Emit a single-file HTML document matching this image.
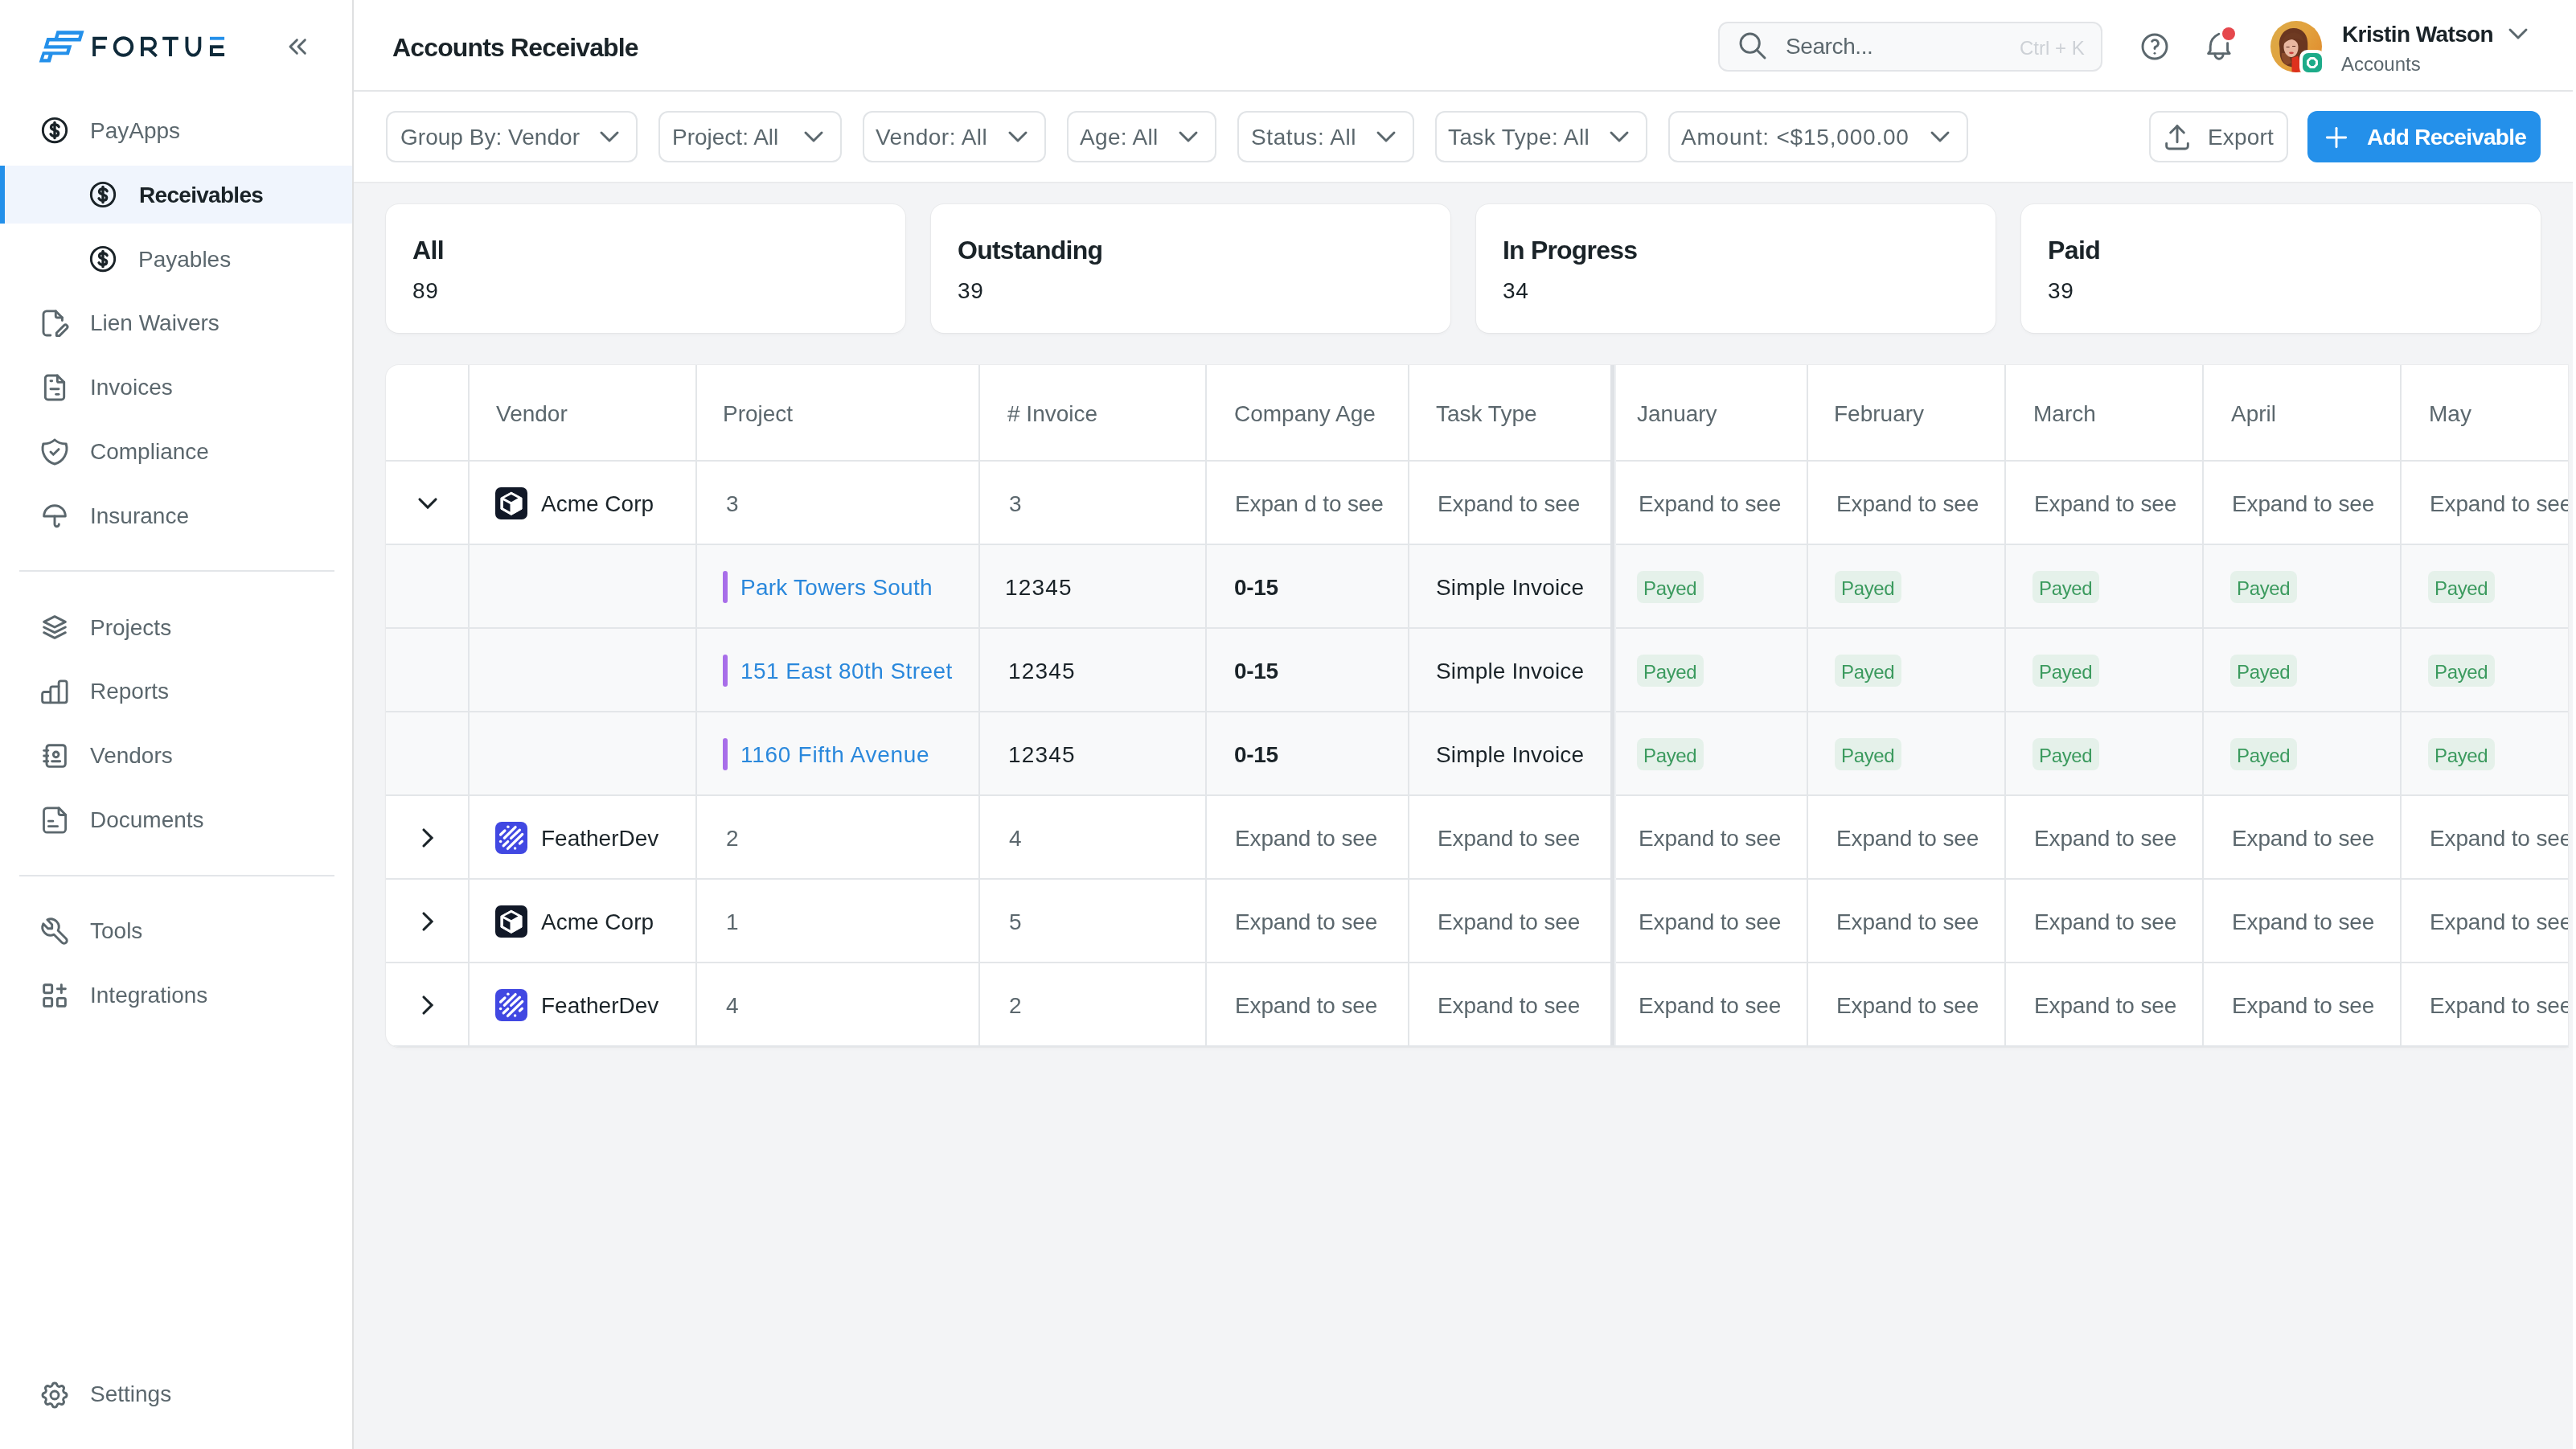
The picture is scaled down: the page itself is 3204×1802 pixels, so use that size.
<!DOCTYPE html>
<html><head><meta charset="utf-8"><title>Accounts Receivable</title><style>
html,body{margin:0;padding:0;}
body{width:3204px;height:1802px;overflow:hidden;position:relative;background:#fff;font-family:"Liberation Sans",sans-serif;}
.abs{position:absolute;}
.t{position:absolute;white-space:nowrap;font-family:"Liberation Sans",sans-serif;-webkit-font-smoothing:antialiased;will-change:transform;}
.ic{position:absolute;overflow:visible;}
.card{background:#fff;border-radius:16px;box-shadow:0 0 0 1px rgba(20,30,40,0.035),0 2px 4px rgba(20,30,40,0.035);}
.tbl{background:#fff;border-radius:16px 0 0 16px;overflow:hidden;box-shadow:0 0 0 1px rgba(20,30,40,0.03),0 2px 4px rgba(20,30,40,0.03);}
</style></head><body>
<div class="abs" style="left:0;top:0;width:438px;height:1802px;background:#fff;"></div>
<div class="abs" style="left:438px;top:0;width:2px;height:1802px;background:#dfe0e1;"></div>
<svg class="ic" style="left:40px;top:30px;width:80px;height:55px" viewBox="0 0 80 55"><g transform="skewX(-16.7)"><path d="M33 8.2H67V12.9H33ZM33 12.9H37.5V17.1H33ZM62.5 12.9H67V17.1H62.5ZM23.5 17.1H67V21.6H23.5ZM23.5 21.6H28V26.2H23.5ZM23.5 26.2H57.2V30.4H23.5ZM52.6 30.0H57.2V34.2H52.6ZM23.2 34.2H57.2V38.3H23.2ZM23 38.3H27V43.3H23ZM32 38.3H37V43.3H32ZM23 43.3H37V47.6H23Z" fill="#2490ea"/></g></svg>
<svg class="ic" style="left:110px;top:40px;width:175px;height:36px" viewBox="110 40 175 36" fill="none" stroke="#0f2a3a" stroke-width="3.9" stroke-linejoin="miter">
<path d="M117.15 69.9V47.75H133.1 M117.15 58.7H131.3" />
<circle cx="153.5" cy="57.95" r="10.75"/>
<path d="M176.95 69.9V47.75H186.5a6.55 6.55 0 0 1 0 13.1H176.95 M185 60.85L194.6 69.9"/>
<path d="M202.2 47.75H221.8 M212 47.75V69.9"/>
<path d="M232.45 45.8V58.6a7.95 10 0 0 0 15.9 0V45.8"/>
<path d="M262.95 69.9V56.3 M261 58.25H277.8 M261 67.95H279.1"/>
<path d="M261 47.75H279.1" stroke="#2490ea"/>
</svg>
<svg class="ic" style="left:350.8px;top:37.5px;width:40px;height:40px;" viewBox="0 0 24 24" fill="none" stroke="#5b676d" stroke-width="1.75" stroke-linecap="round" stroke-linejoin="round"><path d="M11 7l-5 5l5 5"/><path d="M17 7l-5 5l5 5"/></svg>
<div class="abs" style="left:0;top:206px;width:438px;height:72px;background:#f0f5fd;"></div>
<div class="abs" style="left:0;top:206px;width:6px;height:72px;background:#2490ea;"></div>
<svg class="ic" style="left:48px;top:142.2px;width:40px;height:40px;" viewBox="0 0 24 24" fill="none" stroke="#1a2328" stroke-width="1.75" stroke-linecap="round" stroke-linejoin="round"><circle cx="12" cy="12" r="8.8"/><path d="M15.1 9.4C14.7 8.4 13.7 7.7 12 7.7C10.3 7.7 9.3 8.6 9.3 9.8C9.3 11.1 10.5 11.6 12 12C13.6 12.4 14.8 13 14.8 14.3C14.8 15.6 13.8 16.4 12 16.4C10.4 16.4 9.4 15.7 9 14.8" stroke-width="2"/><path d="M12 6.2v11.6" stroke-width="2"/></svg>
<div class="t" style="left:111.5px;top:142.80px;font-size:28px;line-height:40px;color:#5b676d;font-weight:400;letter-spacing:0px;">PayApps</div>
<svg class="ic" style="left:108px;top:222.2px;width:40px;height:40px;" viewBox="0 0 24 24" fill="none" stroke="#1a2328" stroke-width="1.75" stroke-linecap="round" stroke-linejoin="round"><circle cx="12" cy="12" r="8.8"/><path d="M15.1 9.4C14.7 8.4 13.7 7.7 12 7.7C10.3 7.7 9.3 8.6 9.3 9.8C9.3 11.1 10.5 11.6 12 12C13.6 12.4 14.8 13 14.8 14.3C14.8 15.6 13.8 16.4 12 16.4C10.4 16.4 9.4 15.7 9 14.8" stroke-width="2"/><path d="M12 6.2v11.6" stroke-width="2"/></svg>
<div class="t" style="left:172.5px;top:222.80px;font-size:28px;line-height:40px;color:#1a2328;font-weight:700;letter-spacing:-0.7px;">Receivables</div>
<svg class="ic" style="left:108px;top:302.2px;width:40px;height:40px;" viewBox="0 0 24 24" fill="none" stroke="#1a2328" stroke-width="1.75" stroke-linecap="round" stroke-linejoin="round"><circle cx="12" cy="12" r="8.8"/><path d="M15.1 9.4C14.7 8.4 13.7 7.7 12 7.7C10.3 7.7 9.3 8.6 9.3 9.8C9.3 11.1 10.5 11.6 12 12C13.6 12.4 14.8 13 14.8 14.3C14.8 15.6 13.8 16.4 12 16.4C10.4 16.4 9.4 15.7 9 14.8" stroke-width="2"/><path d="M12 6.2v11.6" stroke-width="2"/></svg>
<div class="t" style="left:171.5px;top:302.80px;font-size:28px;line-height:40px;color:#5b676d;font-weight:400;letter-spacing:0px;">Payables</div>
<svg class="ic" style="left:48px;top:381.7px;width:40px;height:40px" viewBox="0 0 40 40" fill="none" stroke="#5b676d" stroke-width="2.9" stroke-linecap="round" stroke-linejoin="round"><path d="M14.8 35H10a4 4 0 0 1 -4 -4V8.84a4 4 0 0 1 4 -4H21.2L29.4 13V16.5"/><path d="M21.3 4.84V11a2 2 0 0 0 2 2H29.4"/><path d="M22.3 35.6v-3.6l9.4 -9.4a2.55 2.55 0 0 1 3.6 3.6l-9.4 9.4z"/></svg>
<div class="t" style="left:111.5px;top:382.30px;font-size:28px;line-height:40px;color:#5b676d;font-weight:400;letter-spacing:0px;">Lien Waivers</div>
<svg class="ic" style="left:48px;top:461.7px;width:40px;height:40px;" viewBox="0 0 24 24" fill="none" stroke="#5b676d" stroke-width="1.75" stroke-linecap="round" stroke-linejoin="round"><path d="M14 3v4a1 1 0 0 0 1 1h4"/><path d="M17 21h-10a2 2 0 0 1 -2 -2v-14a2 2 0 0 1 2 -2h7l5 5v11a2 2 0 0 1 -2 2z"/><path d="M9 7l1 0"/><path d="M9 13l6 0"/><path d="M13 17l2 0"/></svg>
<div class="t" style="left:111.5px;top:462.30px;font-size:28px;line-height:40px;color:#5b676d;font-weight:400;letter-spacing:0px;">Invoices</div>
<svg class="ic" style="left:48px;top:541.7px;width:40px;height:40px;" viewBox="0 0 24 24" fill="none" stroke="#5b676d" stroke-width="1.75" stroke-linecap="round" stroke-linejoin="round"><path d="M9 12l2 2l4 -4"/><path d="M12 3a12 12 0 0 0 8.5 3a12 12 0 0 1 -8.5 15a12 12 0 0 1 -8.5 -15a12 12 0 0 0 8.5 -3"/></svg>
<div class="t" style="left:111.5px;top:542.30px;font-size:28px;line-height:40px;color:#5b676d;font-weight:400;letter-spacing:0px;">Compliance</div>
<svg class="ic" style="left:48px;top:621.7px;width:40px;height:40px;" viewBox="0 0 24 24" fill="none" stroke="#5b676d" stroke-width="1.75" stroke-linecap="round" stroke-linejoin="round"><path d="M4 12a8 8 0 0 1 16 0z"/><path d="M12 12v6a1.6 1.6 0 0 0 3.2 0"/></svg>
<div class="t" style="left:111.5px;top:622.30px;font-size:28px;line-height:40px;color:#5b676d;font-weight:400;letter-spacing:0px;">Insurance</div>
<svg class="ic" style="left:48px;top:759.95px;width:40px;height:40px;" viewBox="0 0 24 24" fill="none" stroke="#5b676d" stroke-width="1.75" stroke-linecap="round" stroke-linejoin="round"><path d="M12 4l-8 4l8 4l8 -4l-8 -4"/><path d="M4 12l8 4l8 -4"/><path d="M4 16l8 4l8 -4"/></svg>
<div class="t" style="left:111.5px;top:760.55px;font-size:28px;line-height:40px;color:#5b676d;font-weight:400;letter-spacing:0px;">Projects</div>
<svg class="ic" style="left:48px;top:839.7px;width:40px;height:40px" viewBox="0 0 40 40" fill="none" stroke="#5b676d" stroke-width="2.8" stroke-linecap="round" stroke-linejoin="round"><path d="M4.6 31.3V23a2.5 2.5 0 0 1 2.5 -2.5H14.8V16.4a2.5 2.5 0 0 1 2.5 -2.5H25.1V9.4a2.5 2.5 0 0 1 2.5 -2.5H32.6a2.5 2.5 0 0 1 2.5 2.5V31.3a2.5 2.5 0 0 1 -2.5 2.5H7.1a2.5 2.5 0 0 1 -2.5 -2.5z"/><path d="M14.8 20.5V33.8M25.1 13.9V33.8"/></svg>
<div class="t" style="left:111.5px;top:840.30px;font-size:28px;line-height:40px;color:#5b676d;font-weight:400;letter-spacing:0px;">Reports</div>
<svg class="ic" style="left:48px;top:919.7px;width:40px;height:40px;" viewBox="0 0 24 24" fill="none" stroke="#5b676d" stroke-width="1.75" stroke-linecap="round" stroke-linejoin="round"><path d="M20 6v12a2 2 0 0 1 -2 2h-10a2 2 0 0 1 -2 -2v-12a2 2 0 0 1 2 -2h10a2 2 0 0 1 2 2z"/><path d="M10 16h6"/><path d="M13 11m-2 0a2 2 0 1 0 4 0a2 2 0 1 0 -4 0"/><path d="M4 8h3"/><path d="M4 12h3"/><path d="M4 16h3"/></svg>
<div class="t" style="left:111.5px;top:920.30px;font-size:28px;line-height:40px;color:#5b676d;font-weight:400;letter-spacing:0px;">Vendors</div>
<svg class="ic" style="left:48px;top:999.7px;width:40px;height:40px" viewBox="0 0 40 40" fill="none" stroke="#5b676d" stroke-width="2.8" stroke-linecap="round" stroke-linejoin="round"><path d="M25.3 4.8H10.5a4 4 0 0 0 -4 4V31.2a4 4 0 0 0 4 4H29.6a4 4 0 0 0 4 -4V13.3Z"/><path d="M25 4.8V11a2.5 2.5 0 0 0 2.5 2.5H33.6"/><path d="M12.4 21.2H17.9M12.4 27.7H23.6"/></svg>
<div class="t" style="left:111.5px;top:1000.30px;font-size:28px;line-height:40px;color:#5b676d;font-weight:400;letter-spacing:0px;">Documents</div>
<svg class="ic" style="left:48px;top:1138.15px;width:40px;height:40px;" viewBox="0 0 24 24" fill="none" stroke="#5b676d" stroke-width="1.75" stroke-linecap="round" stroke-linejoin="round"><path d="M7 10h3v-3l-3.5 -3.5a6 6 0 0 1 8 8l6 6a2 2 0 0 1 -3 3l-6 -6a6 6 0 0 1 -8 -8l3.5 3.5"/></svg>
<div class="t" style="left:111.5px;top:1137.55px;font-size:28px;line-height:40px;color:#5b676d;font-weight:400;letter-spacing:0px;">Tools</div>
<svg class="ic" style="left:48px;top:1218.15px;width:40px;height:40px;" viewBox="0 0 24 24" fill="none" stroke="#5b676d" stroke-width="1.75" stroke-linecap="round" stroke-linejoin="round"><path d="M4 4m0 1a1 1 0 0 1 1 -1h4a1 1 0 0 1 1 1v4a1 1 0 0 1 -1 1h-4a1 1 0 0 1 -1 -1z"/><path d="M4 14m0 1a1 1 0 0 1 1 -1h4a1 1 0 0 1 1 1v4a1 1 0 0 1 -1 1h-4a1 1 0 0 1 -1 -1z"/><path d="M14 14m0 1a1 1 0 0 1 1 -1h4a1 1 0 0 1 1 1v4a1 1 0 0 1 -1 1h-4a1 1 0 0 1 -1 -1z"/><path d="M14 7l6 0"/><path d="M17 4l0 6"/></svg>
<div class="t" style="left:111.5px;top:1217.55px;font-size:28px;line-height:40px;color:#5b676d;font-weight:400;letter-spacing:0px;">Integrations</div>
<svg class="ic" style="left:48px;top:1714.65px;width:40px;height:40px;" viewBox="0 0 24 24" fill="none" stroke="#5b676d" stroke-width="1.75" stroke-linecap="round" stroke-linejoin="round"><path d="M10.325 4.317c.426 -1.756 2.924 -1.756 3.35 0a1.724 1.724 0 0 0 2.573 1.066c1.543 -.94 3.31 .826 2.37 2.37a1.724 1.724 0 0 0 1.065 2.572c1.756 .426 1.756 2.924 0 3.35a1.724 1.724 0 0 0 -1.066 2.573c.94 1.543 -.826 3.31 -2.37 2.37a1.724 1.724 0 0 0 -2.572 1.065c-.426 1.756 -2.924 1.756 -3.35 0a1.724 1.724 0 0 0 -2.573 -1.066c-1.543 .94 -3.31 -.826 -2.37 -2.37a1.724 1.724 0 0 0 -1.065 -2.572c-1.756 -.426 -1.756 -2.924 0 -3.35a1.724 1.724 0 0 0 1.066 -2.573c-.94 -1.543 .826 -3.31 2.37 -2.37c1 .608 2.296 .07 2.572 -1.065z"/><path d="M9 12a3 3 0 1 0 6 0a3 3 0 0 0 -6 0"/></svg>
<div class="t" style="left:111.5px;top:1714.05px;font-size:28px;line-height:40px;color:#5b676d;font-weight:400;letter-spacing:0px;">Settings</div>
<div class="abs" style="left:24px;top:709px;width:392px;height:2px;background:#e3e6e9;"></div>
<div class="abs" style="left:24px;top:1088px;width:392px;height:2px;background:#e3e6e9;"></div>
<div class="abs" style="left:440px;top:0;width:2760px;height:112px;background:#fff;"></div>
<div class="abs" style="left:440px;top:112px;width:2760px;height:2px;background:#e4e6e8;"></div>
<div class="t" style="left:488px;top:39.41px;font-size:32px;line-height:40px;color:#1a2328;font-weight:700;letter-spacing:-0.85px;">Accounts Receivable</div>
<div class="abs" style="left:2137px;top:27px;width:478px;height:62px;box-sizing:border-box;border:2px solid #e3e5e8;border-radius:12px;background:#f8f9fa;"></div>
<svg class="ic" style="left:2160.4px;top:37.45px;width:40px;height:40px;" viewBox="0 0 24 24" fill="none" stroke="#5b676d" stroke-width="1.75" stroke-linecap="round" stroke-linejoin="round"><path d="M10 10m-7 0a7 7 0 1 0 14 0a7 7 0 1 0 -14 0"/><path d="M21 21l-6 -6"/></svg>
<div class="t" style="left:2221px;top:38.30px;font-size:28px;line-height:40px;color:#5b676d;font-weight:400;letter-spacing:-0.4px;">Search...</div>
<div class="t" style="left:2512px;top:39.68px;font-size:24px;line-height:40px;color:#cdd1d6;font-weight:400;letter-spacing:0px;">Ctrl + K</div>
<svg class="ic" style="left:2660px;top:38px;width:40px;height:40px;" viewBox="0 0 24 24" fill="none" stroke="#5b676d" stroke-width="1.75" stroke-linecap="round" stroke-linejoin="round"><path d="M12 12m-9 0a9 9 0 1 0 18 0a9 9 0 1 0 -18 0"/><path d="M12 17l0 .01"/><path d="M12 13.5a1.5 1.5 0 0 1 1 -1.5a2.6 2.6 0 1 0 -3 -4"/></svg>
<svg class="ic" style="left:2740px;top:30px;width:48px;height:48px" viewBox="2740 30 48 48" fill="none" stroke="#5b676d" stroke-width="2.9" stroke-linecap="round" stroke-linejoin="round">
<path d="M2759.8 42.2C2753.6 45.2 2749.2 50 2749.2 57.5V63.2L2746.6 66.6H2773.2L2770.6 63.2V53.6"/>
<path d="M2754.8 67a5.2 6.2 0 0 0 10.4 0"/></svg>
<div class="abs" style="left:2764px;top:34px;width:16px;height:16px;border-radius:50%;background:#e5484d;"></div>
<svg class="ic" style="left:2824px;top:26px;width:64px;height:64px" viewBox="0 0 64 64">
<defs><clipPath id="avc"><circle cx="32" cy="32" r="32"/></clipPath>
<linearGradient id="avbg" x1="0" y1="0" x2="1" y2="0.6"><stop offset="0" stop-color="#dcaa48"/><stop offset="0.6" stop-color="#e2a23e"/><stop offset="1" stop-color="#e08f30"/></linearGradient></defs>
<g clip-path="url(#avc)">
<rect width="64" height="64" fill="url(#avbg)"/>
<path d="M11 31C10 19 17 9.5 28 9C38 8.5 45 15 46 25C47 32 45 38 48 45C45 50 42 53 38 55L30 58C22 57 15 54 13 47C11 42 12 37 11 31Z" fill="#6a3620"/>
<path d="M14 40C13 46 15 51 20 55L26 52L22 40Z" fill="#8a4a2a"/>
<path d="M16.5 31C17 25 21 22.5 26 23C31 23.5 34.5 27 34.5 33C34.5 39 31.5 44.5 26.5 45C21 45.5 16 39 16.5 31Z" fill="#e8b7a0"/>
<path d="M14 28C16 19 22 14 30 14.5C37 15 41 20 41 26C38 22.5 33 21 28 22.5C24 23.5 21 24 18 27C16.5 28.5 15 30 14 31Z" fill="#6e3a22"/>
<path d="M20 32.5h3.2M27.5 31.5h3.2" stroke="#5a2e22" stroke-width="1.1" stroke-linecap="round"/>
<ellipse cx="26" cy="39.8" rx="2.9" ry="1.4" fill="#c9413c"/>
<path d="M26.5 46L36 43L38 64H26.5Z" fill="#dd311d"/>
<path d="M34 42C37 44 40 48 41 52L38 56L35 46Z" fill="#5c2e1c"/>
</g></svg>
<div class="abs" style="left:2860px;top:62px;width:32px;height:32px;box-sizing:border-box;border-radius:10px;background:#fff;"></div>
<div class="abs" style="left:2864px;top:66px;width:24px;height:24px;border-radius:7px;background:#1dab89;"></div>
<svg class="ic" style="left:2866px;top:68px;width:20px;height:20px" viewBox="0 0 20 20"><path d="M7.76 4.56H12.24L15.44 7.76V12.24L12.24 15.44H7.76L4.56 12.24V7.76Z" fill="none" stroke="#fff" stroke-width="3" stroke-linejoin="round"/></svg>
<div class="t" style="left:2912.5px;top:22.80px;font-size:28px;line-height:40px;color:#1a2328;font-weight:700;letter-spacing:-0.6px;">Kristin Watson</div>
<div class="t" style="left:2912px;top:59.68px;font-size:24px;line-height:40px;color:#5b676d;font-weight:400;letter-spacing:0px;">Accounts</div>
<svg class="ic" style="left:3112px;top:22px;width:40px;height:40px;" viewBox="0 0 24 24" fill="none" stroke="#5b676d" stroke-width="1.75" stroke-linecap="round" stroke-linejoin="round"><path d="M6 9l6 6l6 -6"/></svg>
<div class="abs" style="left:440px;top:114px;width:2760px;height:112px;background:#fff;"></div>
<div class="abs" style="left:440px;top:226px;width:2760px;height:2px;background:#eaebed;"></div>
<div class="abs" style="left:440px;top:228px;width:2760px;height:1574px;background:#f3f4f6;"></div>
<div class="abs" style="left:3200px;top:0;width:4px;height:1802px;background:#fff;"></div>
<div class="abs" style="left:480px;top:138px;width:313px;height:64px;box-sizing:border-box;border:2px solid #e1e4e7;border-radius:12px;background:#fff;"></div>
<div class="t" style="left:497.5px;top:150.80px;font-size:28px;line-height:40px;color:#5b676d;font-weight:400;letter-spacing:0.025px;">Group By: Vendor</div>
<svg class="ic" style="left:738.1500000000001px;top:150px;width:40px;height:40px;" viewBox="0 0 24 24" fill="none" stroke="#5b676d" stroke-width="1.75" stroke-linecap="round" stroke-linejoin="round"><path d="M6 9l6 6l6 -6"/></svg>
<div class="abs" style="left:819px;top:138px;width:228px;height:64px;box-sizing:border-box;border:2px solid #e1e4e7;border-radius:12px;background:#fff;"></div>
<div class="t" style="left:836px;top:150.80px;font-size:28px;line-height:40px;color:#5b676d;font-weight:400;letter-spacing:0px;">Project: All</div>
<svg class="ic" style="left:992.1500000000001px;top:150px;width:40px;height:40px;" viewBox="0 0 24 24" fill="none" stroke="#5b676d" stroke-width="1.75" stroke-linecap="round" stroke-linejoin="round"><path d="M6 9l6 6l6 -6"/></svg>
<div class="abs" style="left:1072.5px;top:138px;width:228.75px;height:64px;box-sizing:border-box;border:2px solid #e1e4e7;border-radius:12px;background:#fff;"></div>
<div class="t" style="left:1089.25px;top:150.80px;font-size:28px;line-height:40px;color:#5b676d;font-weight:400;letter-spacing:0.486px;">Vendor: All</div>
<svg class="ic" style="left:1246.4px;top:150px;width:40px;height:40px;" viewBox="0 0 24 24" fill="none" stroke="#5b676d" stroke-width="1.75" stroke-linecap="round" stroke-linejoin="round"><path d="M6 9l6 6l6 -6"/></svg>
<div class="abs" style="left:1327px;top:138px;width:186px;height:64px;box-sizing:border-box;border:2px solid #e1e4e7;border-radius:12px;background:#fff;"></div>
<div class="t" style="left:1343.25px;top:150.80px;font-size:28px;line-height:40px;color:#5b676d;font-weight:400;letter-spacing:0.328px;">Age: All</div>
<svg class="ic" style="left:1458.15px;top:150px;width:40px;height:40px;" viewBox="0 0 24 24" fill="none" stroke="#5b676d" stroke-width="1.75" stroke-linecap="round" stroke-linejoin="round"><path d="M6 9l6 6l6 -6"/></svg>
<div class="abs" style="left:1538.75px;top:138px;width:220.5px;height:64px;box-sizing:border-box;border:2px solid #e1e4e7;border-radius:12px;background:#fff;"></div>
<div class="t" style="left:1555.75px;top:150.80px;font-size:28px;line-height:40px;color:#5b676d;font-weight:400;letter-spacing:0.598px;">Status: All</div>
<svg class="ic" style="left:1704.4px;top:150px;width:40px;height:40px;" viewBox="0 0 24 24" fill="none" stroke="#5b676d" stroke-width="1.75" stroke-linecap="round" stroke-linejoin="round"><path d="M6 9l6 6l6 -6"/></svg>
<div class="abs" style="left:1784.5px;top:138px;width:264.75px;height:64px;box-sizing:border-box;border:2px solid #e1e4e7;border-radius:12px;background:#fff;"></div>
<div class="t" style="left:1801.25px;top:150.80px;font-size:28px;line-height:40px;color:#5b676d;font-weight:400;letter-spacing:0.388px;">Task Type: All</div>
<svg class="ic" style="left:1994.4px;top:150px;width:40px;height:40px;" viewBox="0 0 24 24" fill="none" stroke="#5b676d" stroke-width="1.75" stroke-linecap="round" stroke-linejoin="round"><path d="M6 9l6 6l6 -6"/></svg>
<div class="abs" style="left:2074.5px;top:138px;width:373.0px;height:64px;box-sizing:border-box;border:2px solid #e1e4e7;border-radius:12px;background:#fff;"></div>
<div class="t" style="left:2091.25px;top:150.80px;font-size:28px;line-height:40px;color:#5b676d;font-weight:400;letter-spacing:0.799px;">Amount: &lt;$15,000.00</div>
<svg class="ic" style="left:2392.6499999999996px;top:150px;width:40px;height:40px;" viewBox="0 0 24 24" fill="none" stroke="#5b676d" stroke-width="1.75" stroke-linecap="round" stroke-linejoin="round"><path d="M6 9l6 6l6 -6"/></svg>
<div class="abs" style="left:2672.5px;top:138px;width:173px;height:64px;box-sizing:border-box;border:2px solid #e1e4e7;border-radius:12px;background:#fff;"></div>
<svg class="ic" style="left:2687.5px;top:149.8px;width:40px;height:40px;" viewBox="0 0 24 24" fill="none" stroke="#5b676d" stroke-width="1.75" stroke-linecap="round" stroke-linejoin="round"><path d="M4 17v2a2 2 0 0 0 2 2h12a2 2 0 0 0 2 -2v-2"/><path d="M7 9l5 -5l5 5"/><path d="M12 4l0 12"/></svg>
<div class="t" style="left:2746px;top:150.80px;font-size:28px;line-height:40px;color:#5b676d;font-weight:400;letter-spacing:0.15px;">Export</div>
<div class="abs" style="left:2870px;top:138px;width:290px;height:64px;border-radius:12px;background:#2490ea;"></div>
<svg class="ic" style="left:2885.75px;top:150.6px;width:40px;height:40px;" viewBox="0 0 24 24" fill="none" stroke="#fff" stroke-width="1.75" stroke-linecap="round" stroke-linejoin="round"><path d="M12 5l0 14"/><path d="M5 12l14 0"/></svg>
<div class="t" style="left:2944px;top:150.80px;font-size:28px;line-height:40px;color:#fff;font-weight:700;letter-spacing:-0.75px;">Add Receivable</div>
<div class="abs card" style="left:480px;top:254px;width:646px;height:160px;"></div>
<div class="t" style="left:513px;top:290.66px;font-size:32px;line-height:40px;color:#1a2328;font-weight:700;letter-spacing:-0.6px;">All</div>
<div class="t" style="left:513px;top:342.05px;font-size:28px;line-height:40px;color:#1a2328;font-weight:400;letter-spacing:0.6px;">89</div>
<div class="abs card" style="left:1158px;top:254px;width:646px;height:160px;"></div>
<div class="t" style="left:1191px;top:290.66px;font-size:32px;line-height:40px;color:#1a2328;font-weight:700;letter-spacing:-0.742px;">Outstanding</div>
<div class="t" style="left:1191px;top:342.05px;font-size:28px;line-height:40px;color:#1a2328;font-weight:400;letter-spacing:0.6px;">39</div>
<div class="abs card" style="left:1836px;top:254px;width:646px;height:160px;"></div>
<div class="t" style="left:1869px;top:290.66px;font-size:32px;line-height:40px;color:#1a2328;font-weight:700;letter-spacing:-0.806px;">In Progress</div>
<div class="t" style="left:1869px;top:342.05px;font-size:28px;line-height:40px;color:#1a2328;font-weight:400;letter-spacing:0.6px;">34</div>
<div class="abs card" style="left:2514px;top:254px;width:646px;height:160px;"></div>
<div class="t" style="left:2547px;top:290.66px;font-size:32px;line-height:40px;color:#1a2328;font-weight:700;letter-spacing:-0.6px;">Paid</div>
<div class="t" style="left:2547px;top:342.05px;font-size:28px;line-height:40px;color:#1a2328;font-weight:400;letter-spacing:0.6px;">39</div>
<div class="abs tbl" style="left:480px;top:454px;width:2714px;height:848px;">
<div class="abs" style="left:0;top:224px;width:2714px;height:312px;background:#f8f9fa;"></div>
<div class="abs" style="left:0;top:118px;width:2714px;height:2px;background:#e3e6e9;"></div>
<div class="abs" style="left:0;top:222px;width:2714px;height:2px;background:#e3e6e9;"></div>
<div class="abs" style="left:0;top:326px;width:2714px;height:2px;background:#e3e6e9;"></div>
<div class="abs" style="left:0;top:430px;width:2714px;height:2px;background:#e3e6e9;"></div>
<div class="abs" style="left:0;top:534px;width:2714px;height:2px;background:#e3e6e9;"></div>
<div class="abs" style="left:0;top:638px;width:2714px;height:2px;background:#e3e6e9;"></div>
<div class="abs" style="left:0;top:742px;width:2714px;height:2px;background:#e3e6e9;"></div>
<div class="abs" style="left:102px;top:0;width:2px;height:848px;background:#e3e6e9;"></div>
<div class="abs" style="left:385px;top:0;width:2px;height:848px;background:#e3e6e9;"></div>
<div class="abs" style="left:737px;top:0;width:2px;height:848px;background:#e3e6e9;"></div>
<div class="abs" style="left:1019px;top:0;width:2px;height:848px;background:#e3e6e9;"></div>
<div class="abs" style="left:1271px;top:0;width:2px;height:848px;background:#e3e6e9;"></div>
<div class="abs" style="left:1767px;top:0;width:2px;height:848px;background:#e3e6e9;"></div>
<div class="abs" style="left:2013px;top:0;width:2px;height:848px;background:#e3e6e9;"></div>
<div class="abs" style="left:2259px;top:0;width:2px;height:848px;background:#e3e6e9;"></div>
<div class="abs" style="left:2505px;top:0;width:2px;height:848px;background:#e3e6e9;"></div>
<div class="abs" style="left:1523px;top:0;width:5px;height:848px;background:#dfe2e6;"></div>
<div class="abs" style="left:1528px;top:0;width:2px;height:848px;background:#eef0f3;"></div>
<div class="t" style="left:137px;top:40.80px;font-size:28px;line-height:40px;color:#5b676d;font-weight:400;letter-spacing:0px;">Vendor</div>
<div class="t" style="left:418.5px;top:40.80px;font-size:28px;line-height:40px;color:#5b676d;font-weight:400;letter-spacing:0px;">Project</div>
<div class="t" style="left:773px;top:40.80px;font-size:28px;line-height:40px;color:#5b676d;font-weight:400;letter-spacing:0px;"># Invoice</div>
<div class="t" style="left:1055px;top:40.80px;font-size:28px;line-height:40px;color:#5b676d;font-weight:400;letter-spacing:0px;">Company Age</div>
<div class="t" style="left:1306px;top:40.80px;font-size:28px;line-height:40px;color:#5b676d;font-weight:400;letter-spacing:0px;">Task Type</div>
<div class="t" style="left:1556px;top:40.80px;font-size:28px;line-height:40px;color:#5b676d;font-weight:400;letter-spacing:0px;">January</div>
<div class="t" style="left:1801px;top:40.80px;font-size:28px;line-height:40px;color:#5b676d;font-weight:400;letter-spacing:0px;">February</div>
<div class="t" style="left:2049px;top:40.80px;font-size:28px;line-height:40px;color:#5b676d;font-weight:400;letter-spacing:0px;">March</div>
<div class="t" style="left:2295px;top:40.80px;font-size:28px;line-height:40px;color:#5b676d;font-weight:400;letter-spacing:0px;">April</div>
<div class="t" style="left:2541px;top:40.80px;font-size:28px;line-height:40px;color:#5b676d;font-weight:400;letter-spacing:0px;">May</div>
<svg class="ic" style="left:32px;top:152px;width:40px;height:40px" viewBox="0 0 24 24" fill="none" stroke="#1a2328" stroke-width="1.9" stroke-linecap="round" stroke-linejoin="miter"><path d="M6 9l6 6l6 -6"/></svg>
<svg class="ic" style="left:136px;top:152px;width:40px;height:40px" viewBox="0 0 40 40"><rect width="40" height="40" rx="7" fill="#111827"/><path d="M19.9 6.1L33.1 13.25V27.1L19.9 34.5L6.9 27.1V13.25Z" fill="#fff" stroke="#fff" stroke-width="1" stroke-linejoin="round"/><path d="M19.9 9.1L28.4 13.5L19.9 18.2L11 13.5Z" fill="#111827"/><path d="M9.9 16.3L18.5 21V30.6L9.9 25.7Z" fill="#111827"/></svg>
<div class="t" style="left:193px;top:153.30px;font-size:28px;line-height:40px;color:#1a2328;font-weight:400;letter-spacing:0px;">Acme Corp</div>
<div class="t" style="left:423px;top:153.30px;font-size:28px;line-height:40px;color:#5b676d;font-weight:400;letter-spacing:0px;">3</div>
<div class="t" style="left:774.5px;top:153.30px;font-size:28px;line-height:40px;color:#5b676d;font-weight:400;letter-spacing:0px;">3</div>
<div class="t" style="left:1056px;top:153.30px;font-size:28px;line-height:40px;color:#5b676d;font-weight:400;letter-spacing:-0.15px;">Expan d to see</div>
<div class="t" style="left:1308px;top:153.30px;font-size:28px;line-height:40px;color:#5b676d;font-weight:400;letter-spacing:-0.15px;">Expand to see</div>
<div class="t" style="left:1558px;top:153.30px;font-size:28px;line-height:40px;color:#5b676d;font-weight:400;letter-spacing:-0.15px;">Expand to see</div>
<div class="t" style="left:1804px;top:153.30px;font-size:28px;line-height:40px;color:#5b676d;font-weight:400;letter-spacing:-0.15px;">Expand to see</div>
<div class="t" style="left:2050px;top:153.30px;font-size:28px;line-height:40px;color:#5b676d;font-weight:400;letter-spacing:-0.15px;">Expand to see</div>
<div class="t" style="left:2296px;top:153.30px;font-size:28px;line-height:40px;color:#5b676d;font-weight:400;letter-spacing:-0.15px;">Expand to see</div>
<div class="t" style="left:2542px;top:153.30px;font-size:28px;line-height:40px;color:#5b676d;font-weight:400;letter-spacing:-0.15px;">Expand to see</div>
<div class="abs" style="left:419px;top:256px;width:6px;height:40px;border-radius:3px;background:#a86ee9;"></div>
<div class="t" style="left:440.5px;top:257.30px;font-size:28px;line-height:40px;color:#2a88dc;font-weight:400;letter-spacing:0.25px;">Park Towers South</div>
<div class="t" style="left:770px;top:257.30px;font-size:28px;line-height:40px;color:#1a2328;font-weight:400;letter-spacing:1.2px;">12345</div>
<div class="t" style="left:1054.5px;top:257.30px;font-size:28px;line-height:40px;color:#1a2328;font-weight:700;letter-spacing:-0.3px;">0-15</div>
<div class="t" style="left:1306px;top:257.30px;font-size:28px;line-height:40px;color:#1a2328;font-weight:400;letter-spacing:0.15px;">Simple Invoice</div>
<div class="abs" style="left:1556px;top:256px;width:83px;height:40px;border-radius:8px;background:#e5f1ea;"></div>
<div class="t" style="left:1564px;top:257.68px;font-size:24px;line-height:40px;color:#3b9a5e;font-weight:400;letter-spacing:-0.35px;">Payed</div>
<div class="abs" style="left:1802px;top:256px;width:83px;height:40px;border-radius:8px;background:#e5f1ea;"></div>
<div class="t" style="left:1810px;top:257.68px;font-size:24px;line-height:40px;color:#3b9a5e;font-weight:400;letter-spacing:-0.35px;">Payed</div>
<div class="abs" style="left:2048px;top:256px;width:83px;height:40px;border-radius:8px;background:#e5f1ea;"></div>
<div class="t" style="left:2056px;top:257.68px;font-size:24px;line-height:40px;color:#3b9a5e;font-weight:400;letter-spacing:-0.35px;">Payed</div>
<div class="abs" style="left:2294px;top:256px;width:83px;height:40px;border-radius:8px;background:#e5f1ea;"></div>
<div class="t" style="left:2302px;top:257.68px;font-size:24px;line-height:40px;color:#3b9a5e;font-weight:400;letter-spacing:-0.35px;">Payed</div>
<div class="abs" style="left:2540px;top:256px;width:83px;height:40px;border-radius:8px;background:#e5f1ea;"></div>
<div class="t" style="left:2548px;top:257.68px;font-size:24px;line-height:40px;color:#3b9a5e;font-weight:400;letter-spacing:-0.35px;">Payed</div>
<div class="abs" style="left:419px;top:360px;width:6px;height:40px;border-radius:3px;background:#a86ee9;"></div>
<div class="t" style="left:440.5px;top:361.30px;font-size:28px;line-height:40px;color:#2a88dc;font-weight:400;letter-spacing:0.42px;">151 East 80th Street</div>
<div class="t" style="left:774px;top:361.30px;font-size:28px;line-height:40px;color:#1a2328;font-weight:400;letter-spacing:1.2px;">12345</div>
<div class="t" style="left:1054.5px;top:361.30px;font-size:28px;line-height:40px;color:#1a2328;font-weight:700;letter-spacing:-0.3px;">0-15</div>
<div class="t" style="left:1306px;top:361.30px;font-size:28px;line-height:40px;color:#1a2328;font-weight:400;letter-spacing:0.15px;">Simple Invoice</div>
<div class="abs" style="left:1556px;top:360px;width:83px;height:40px;border-radius:8px;background:#e5f1ea;"></div>
<div class="t" style="left:1564px;top:361.68px;font-size:24px;line-height:40px;color:#3b9a5e;font-weight:400;letter-spacing:-0.35px;">Payed</div>
<div class="abs" style="left:1802px;top:360px;width:83px;height:40px;border-radius:8px;background:#e5f1ea;"></div>
<div class="t" style="left:1810px;top:361.68px;font-size:24px;line-height:40px;color:#3b9a5e;font-weight:400;letter-spacing:-0.35px;">Payed</div>
<div class="abs" style="left:2048px;top:360px;width:83px;height:40px;border-radius:8px;background:#e5f1ea;"></div>
<div class="t" style="left:2056px;top:361.68px;font-size:24px;line-height:40px;color:#3b9a5e;font-weight:400;letter-spacing:-0.35px;">Payed</div>
<div class="abs" style="left:2294px;top:360px;width:83px;height:40px;border-radius:8px;background:#e5f1ea;"></div>
<div class="t" style="left:2302px;top:361.68px;font-size:24px;line-height:40px;color:#3b9a5e;font-weight:400;letter-spacing:-0.35px;">Payed</div>
<div class="abs" style="left:2540px;top:360px;width:83px;height:40px;border-radius:8px;background:#e5f1ea;"></div>
<div class="t" style="left:2548px;top:361.68px;font-size:24px;line-height:40px;color:#3b9a5e;font-weight:400;letter-spacing:-0.35px;">Payed</div>
<div class="abs" style="left:419px;top:464px;width:6px;height:40px;border-radius:3px;background:#a86ee9;"></div>
<div class="t" style="left:440.5px;top:465.30px;font-size:28px;line-height:40px;color:#2a88dc;font-weight:400;letter-spacing:0.72px;">1160 Fifth Avenue</div>
<div class="t" style="left:774px;top:465.30px;font-size:28px;line-height:40px;color:#1a2328;font-weight:400;letter-spacing:1.2px;">12345</div>
<div class="t" style="left:1054.5px;top:465.30px;font-size:28px;line-height:40px;color:#1a2328;font-weight:700;letter-spacing:-0.3px;">0-15</div>
<div class="t" style="left:1306px;top:465.30px;font-size:28px;line-height:40px;color:#1a2328;font-weight:400;letter-spacing:0.15px;">Simple Invoice</div>
<div class="abs" style="left:1556px;top:464px;width:83px;height:40px;border-radius:8px;background:#e5f1ea;"></div>
<div class="t" style="left:1564px;top:465.68px;font-size:24px;line-height:40px;color:#3b9a5e;font-weight:400;letter-spacing:-0.35px;">Payed</div>
<div class="abs" style="left:1802px;top:464px;width:83px;height:40px;border-radius:8px;background:#e5f1ea;"></div>
<div class="t" style="left:1810px;top:465.68px;font-size:24px;line-height:40px;color:#3b9a5e;font-weight:400;letter-spacing:-0.35px;">Payed</div>
<div class="abs" style="left:2048px;top:464px;width:83px;height:40px;border-radius:8px;background:#e5f1ea;"></div>
<div class="t" style="left:2056px;top:465.68px;font-size:24px;line-height:40px;color:#3b9a5e;font-weight:400;letter-spacing:-0.35px;">Payed</div>
<div class="abs" style="left:2294px;top:464px;width:83px;height:40px;border-radius:8px;background:#e5f1ea;"></div>
<div class="t" style="left:2302px;top:465.68px;font-size:24px;line-height:40px;color:#3b9a5e;font-weight:400;letter-spacing:-0.35px;">Payed</div>
<div class="abs" style="left:2540px;top:464px;width:83px;height:40px;border-radius:8px;background:#e5f1ea;"></div>
<div class="t" style="left:2548px;top:465.68px;font-size:24px;line-height:40px;color:#3b9a5e;font-weight:400;letter-spacing:-0.35px;">Payed</div>
<svg class="ic" style="left:32px;top:568px;width:40px;height:40px" viewBox="0 0 24 24" fill="none" stroke="#1a2328" stroke-width="1.9" stroke-linecap="round" stroke-linejoin="miter"><path d="M9 6l6 6l-6 6"/></svg>
<svg class="ic" style="left:136px;top:568px;width:40px;height:40px" viewBox="0 0 40 40"><rect width="40" height="40" rx="8" fill="#4148e2"/><g stroke="#fff" stroke-width="3.3" stroke-linecap="round"><path d="M6.6 16L11.9 11M11.3 20.2L25.1 6.6M19.6 20.4L30.4 10.2M10.2 29.8L15.7 24.6M15.5 33.4L33.7 15.5M30.4 27L33.4 24.3"/></g><g fill="#fff"><circle cx="15.9" cy="6.35" r="1.75"/><circle cx="6.6" cy="24.6" r="1.75"/><circle cx="24.6" cy="32.9" r="1.75"/></g></svg>
<div class="t" style="left:193px;top:569.30px;font-size:28px;line-height:40px;color:#1a2328;font-weight:400;letter-spacing:0px;">FeatherDev</div>
<div class="t" style="left:423px;top:569.30px;font-size:28px;line-height:40px;color:#5b676d;font-weight:400;letter-spacing:0px;">2</div>
<div class="t" style="left:774.5px;top:569.30px;font-size:28px;line-height:40px;color:#5b676d;font-weight:400;letter-spacing:0px;">4</div>
<div class="t" style="left:1056px;top:569.30px;font-size:28px;line-height:40px;color:#5b676d;font-weight:400;letter-spacing:-0.15px;">Expand to see</div>
<div class="t" style="left:1308px;top:569.30px;font-size:28px;line-height:40px;color:#5b676d;font-weight:400;letter-spacing:-0.15px;">Expand to see</div>
<div class="t" style="left:1558px;top:569.30px;font-size:28px;line-height:40px;color:#5b676d;font-weight:400;letter-spacing:-0.15px;">Expand to see</div>
<div class="t" style="left:1804px;top:569.30px;font-size:28px;line-height:40px;color:#5b676d;font-weight:400;letter-spacing:-0.15px;">Expand to see</div>
<div class="t" style="left:2050px;top:569.30px;font-size:28px;line-height:40px;color:#5b676d;font-weight:400;letter-spacing:-0.15px;">Expand to see</div>
<div class="t" style="left:2296px;top:569.30px;font-size:28px;line-height:40px;color:#5b676d;font-weight:400;letter-spacing:-0.15px;">Expand to see</div>
<div class="t" style="left:2542px;top:569.30px;font-size:28px;line-height:40px;color:#5b676d;font-weight:400;letter-spacing:-0.15px;">Expand to see</div>
<svg class="ic" style="left:32px;top:672px;width:40px;height:40px" viewBox="0 0 24 24" fill="none" stroke="#1a2328" stroke-width="1.9" stroke-linecap="round" stroke-linejoin="miter"><path d="M9 6l6 6l-6 6"/></svg>
<svg class="ic" style="left:136px;top:672px;width:40px;height:40px" viewBox="0 0 40 40"><rect width="40" height="40" rx="7" fill="#111827"/><path d="M19.9 6.1L33.1 13.25V27.1L19.9 34.5L6.9 27.1V13.25Z" fill="#fff" stroke="#fff" stroke-width="1" stroke-linejoin="round"/><path d="M19.9 9.1L28.4 13.5L19.9 18.2L11 13.5Z" fill="#111827"/><path d="M9.9 16.3L18.5 21V30.6L9.9 25.7Z" fill="#111827"/></svg>
<div class="t" style="left:193px;top:673.30px;font-size:28px;line-height:40px;color:#1a2328;font-weight:400;letter-spacing:0px;">Acme Corp</div>
<div class="t" style="left:423px;top:673.30px;font-size:28px;line-height:40px;color:#5b676d;font-weight:400;letter-spacing:0px;">1</div>
<div class="t" style="left:774.5px;top:673.30px;font-size:28px;line-height:40px;color:#5b676d;font-weight:400;letter-spacing:0px;">5</div>
<div class="t" style="left:1056px;top:673.30px;font-size:28px;line-height:40px;color:#5b676d;font-weight:400;letter-spacing:-0.15px;">Expand to see</div>
<div class="t" style="left:1308px;top:673.30px;font-size:28px;line-height:40px;color:#5b676d;font-weight:400;letter-spacing:-0.15px;">Expand to see</div>
<div class="t" style="left:1558px;top:673.30px;font-size:28px;line-height:40px;color:#5b676d;font-weight:400;letter-spacing:-0.15px;">Expand to see</div>
<div class="t" style="left:1804px;top:673.30px;font-size:28px;line-height:40px;color:#5b676d;font-weight:400;letter-spacing:-0.15px;">Expand to see</div>
<div class="t" style="left:2050px;top:673.30px;font-size:28px;line-height:40px;color:#5b676d;font-weight:400;letter-spacing:-0.15px;">Expand to see</div>
<div class="t" style="left:2296px;top:673.30px;font-size:28px;line-height:40px;color:#5b676d;font-weight:400;letter-spacing:-0.15px;">Expand to see</div>
<div class="t" style="left:2542px;top:673.30px;font-size:28px;line-height:40px;color:#5b676d;font-weight:400;letter-spacing:-0.15px;">Expand to see</div>
<svg class="ic" style="left:32px;top:776px;width:40px;height:40px" viewBox="0 0 24 24" fill="none" stroke="#1a2328" stroke-width="1.9" stroke-linecap="round" stroke-linejoin="miter"><path d="M9 6l6 6l-6 6"/></svg>
<svg class="ic" style="left:136px;top:776px;width:40px;height:40px" viewBox="0 0 40 40"><rect width="40" height="40" rx="8" fill="#4148e2"/><g stroke="#fff" stroke-width="3.3" stroke-linecap="round"><path d="M6.6 16L11.9 11M11.3 20.2L25.1 6.6M19.6 20.4L30.4 10.2M10.2 29.8L15.7 24.6M15.5 33.4L33.7 15.5M30.4 27L33.4 24.3"/></g><g fill="#fff"><circle cx="15.9" cy="6.35" r="1.75"/><circle cx="6.6" cy="24.6" r="1.75"/><circle cx="24.6" cy="32.9" r="1.75"/></g></svg>
<div class="t" style="left:193px;top:777.30px;font-size:28px;line-height:40px;color:#1a2328;font-weight:400;letter-spacing:0px;">FeatherDev</div>
<div class="t" style="left:423px;top:777.30px;font-size:28px;line-height:40px;color:#5b676d;font-weight:400;letter-spacing:0px;">4</div>
<div class="t" style="left:774.5px;top:777.30px;font-size:28px;line-height:40px;color:#5b676d;font-weight:400;letter-spacing:0px;">2</div>
<div class="t" style="left:1056px;top:777.30px;font-size:28px;line-height:40px;color:#5b676d;font-weight:400;letter-spacing:-0.15px;">Expand to see</div>
<div class="t" style="left:1308px;top:777.30px;font-size:28px;line-height:40px;color:#5b676d;font-weight:400;letter-spacing:-0.15px;">Expand to see</div>
<div class="t" style="left:1558px;top:777.30px;font-size:28px;line-height:40px;color:#5b676d;font-weight:400;letter-spacing:-0.15px;">Expand to see</div>
<div class="t" style="left:1804px;top:777.30px;font-size:28px;line-height:40px;color:#5b676d;font-weight:400;letter-spacing:-0.15px;">Expand to see</div>
<div class="t" style="left:2050px;top:777.30px;font-size:28px;line-height:40px;color:#5b676d;font-weight:400;letter-spacing:-0.15px;">Expand to see</div>
<div class="t" style="left:2296px;top:777.30px;font-size:28px;line-height:40px;color:#5b676d;font-weight:400;letter-spacing:-0.15px;">Expand to see</div>
<div class="t" style="left:2542px;top:777.30px;font-size:28px;line-height:40px;color:#5b676d;font-weight:400;letter-spacing:-0.15px;">Expand to see</div>
<div class="abs" style="left:0;top:846px;width:2714px;height:2px;background:#e3e6e9;"></div>
</div>
</body></html>
